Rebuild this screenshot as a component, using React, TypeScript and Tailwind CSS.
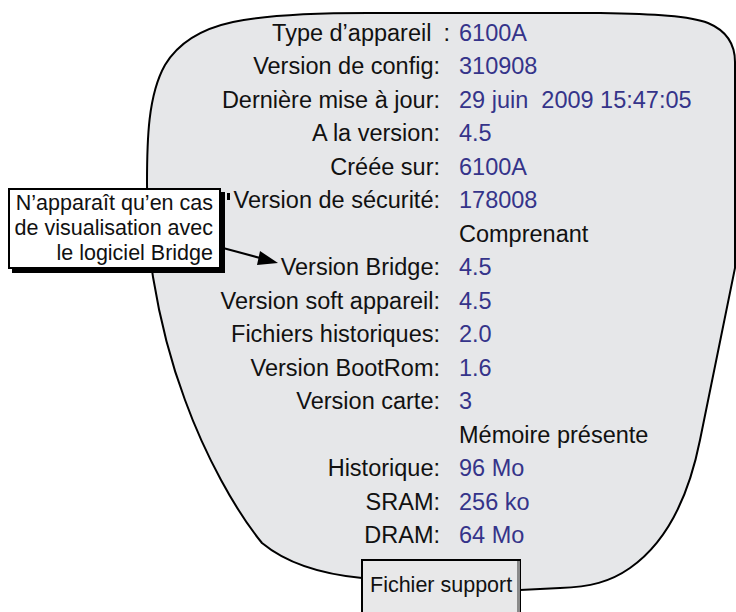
import React from "react";

const rows: { label?: React.ReactNode; value: string; plain?: boolean }[] = [
  { label: "", value: "6100A" },
  { label: "Version de config:", value: "310908" },
  { label: "Dernière mise à jour:", value: "29 juin\u00a0 2009 15:47:05" },
  { label: "A la version:", value: "4.5" },
  { label: "Créée sur:", value: "6100A" },
  { label: "Version de sécurité:", value: "178008" },
  { label: "", value: "Comprenant", plain: true },
  { label: "Version Bridge:", value: "4.5" },
  { label: "Version soft appareil:", value: "4.5" },
  { label: "Fichiers historiques:", value: "2.0" },
  { label: "Version BootRom:", value: "1.6" },
  { label: "Version carte:", value: "3" },
  { label: "", value: "Mémoire présente", plain: true },
  { label: "Historique:", value: "96 Mo" },
  { label: "SRAM:", value: "256 ko" },
  { label: "DRAM:", value: "64 Mo" },
];

export default function App() {
  return (
    <div className="relative w-[736px] h-[612px] overflow-hidden bg-white font-['Liberation_Sans',Arial,sans-serif]">
      <svg className="absolute inset-0" width="736" height="612" viewBox="0 0 736 612">
        <path
          d="M 233 22 C 270 14 320 13 368 13 L 600 13 C 655 14 690 16 708 23 C 727 31 735 45 735 62 L 735 268 L 700 440 C 690 490 670 540 630 568 C 610 582 590 587 560 588 L 520 590 L 362 578 C 320 574 285 562 262 543 C 235 510 205 455 185 400 C 170 360 160 320 153 277 C 148 245 147 215 147 183 C 147 140 148 95 165 65 C 180 40 205 28 233 22 Z"
          fill="#e6e7e9"
          stroke="#000"
          strokeWidth="2"
        />
      </svg>

      <div className="relative pt-[16.5px] grid grid-cols-[440px_1fr] gap-x-[19px] auto-rows-[33.5px] items-center text-[23.5px] leading-none">
        {rows.map((r, i) => (
          <React.Fragment key={i}>
            <div className="text-right text-[#111] whitespace-nowrap">
              {i === 0 ? (
                <>
                  <span>Type d’appareil</span>
                  <span className="inline-block ml-[12px] mr-[-10px]">:</span>
                </>
              ) : (
                r.label
              )}
            </div>
            <div className={`whitespace-pre ${r.plain ? "text-[#111]" : "text-[#35348a]"}`}>{r.value}</div>
          </React.Fragment>
        ))}
      </div>

      <div className="relative mt-[6.5px] ml-[361px] w-[160px] h-[60px] bg-[#e8e8e9] border-l-2 border-t-2 border-r border-black">
        <div className="h-full border-r-[3px] border-[#8a8a8a] pl-[7px] pt-[14px] text-[21.5px] leading-none text-[#111] whitespace-nowrap">
          Fichier support
        </div>
      </div>

      <div className="absolute left-[8px] top-[188px] w-[213px] h-[81px] border-2 border-black bg-white shadow-[4px_4px_0_0_#000] text-right text-[21.5px] leading-[25px] pr-[6px] pt-[1px] text-[#111] whitespace-nowrap">
        <div>N’apparaît qu’en cas</div>
        <div>de visualisation avec</div>
        <div>le logiciel Bridge</div>
      </div>
      <div className="absolute left-[227px] top-[193px] w-[3px] h-[7px] bg-black" />

      <svg className="absolute left-0 top-0 pointer-events-none" width="736" height="612">
        <line x1="223" y1="248" x2="262" y2="258.5" stroke="#000" strokeWidth="2" />
        <polygon points="278,263 260,251 257,265" fill="#000" />
      </svg>
    </div>
  );
}
